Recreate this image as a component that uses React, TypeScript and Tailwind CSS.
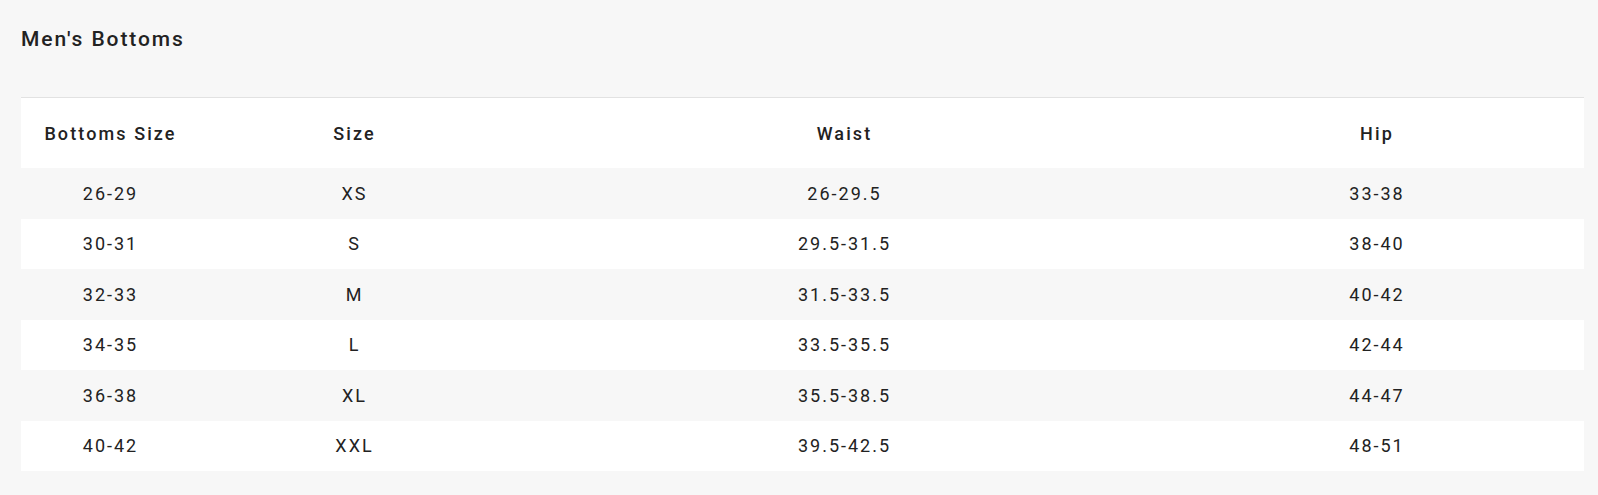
const rows = [
  ["26-29", "XS", "26-29.5", "33-38"],
  ["30-31", "S", "29.5-31.5", "38-40"],
  ["32-33", "M", "31.5-33.5", "40-42"],
  ["34-35", "L", "33.5-35.5", "42-44"],
  ["36-38", "XL", "35.5-38.5", "44-47"],
  ["40-42", "XXL", "39.5-42.5", "48-51"],
];

const headers = ["Bottoms Size", "Size", "Waist", "Hip"];

const cols = "grid grid-cols-[179px_309px_671px_1fr]";

export default function App() {
  return (
    <div className="min-h-[495px] bg-[#f7f7f7] pl-[21px] pr-[14px] pb-[24px] font-['Roboto',sans-serif] text-[#222]">
      <h2 className="pt-[25px] h-[97px] text-[21px] leading-[28px] font-medium tracking-[1.9px]">
        Men's Bottoms
      </h2>
      <div className="border-t border-[#e2e2e2]">
        <div className={`${cols} h-[70px] bg-white items-center text-center text-[18px] font-medium tracking-[2.1px]`}>
          {headers.map((h, i) => (
            <div key={h} className={i === 3 ? "pr-[10px]" : ""}>
              {h}
            </div>
          ))}
        </div>
        {rows.map((r, ri) => (
          <div
            key={ri}
            className={`${cols} h-[50.5px] items-center text-center text-[18px] tracking-[2px] ${
              ri % 2 === 0 ? "bg-[#f7f7f7]" : "bg-white"
            }`}
          >
            {r.map((c, ci) => (
              <div key={ci} className={ci === 3 ? "pr-[10px]" : ""}>
                {c}
              </div>
            ))}
          </div>
        ))}
      </div>
    </div>
  );
}
